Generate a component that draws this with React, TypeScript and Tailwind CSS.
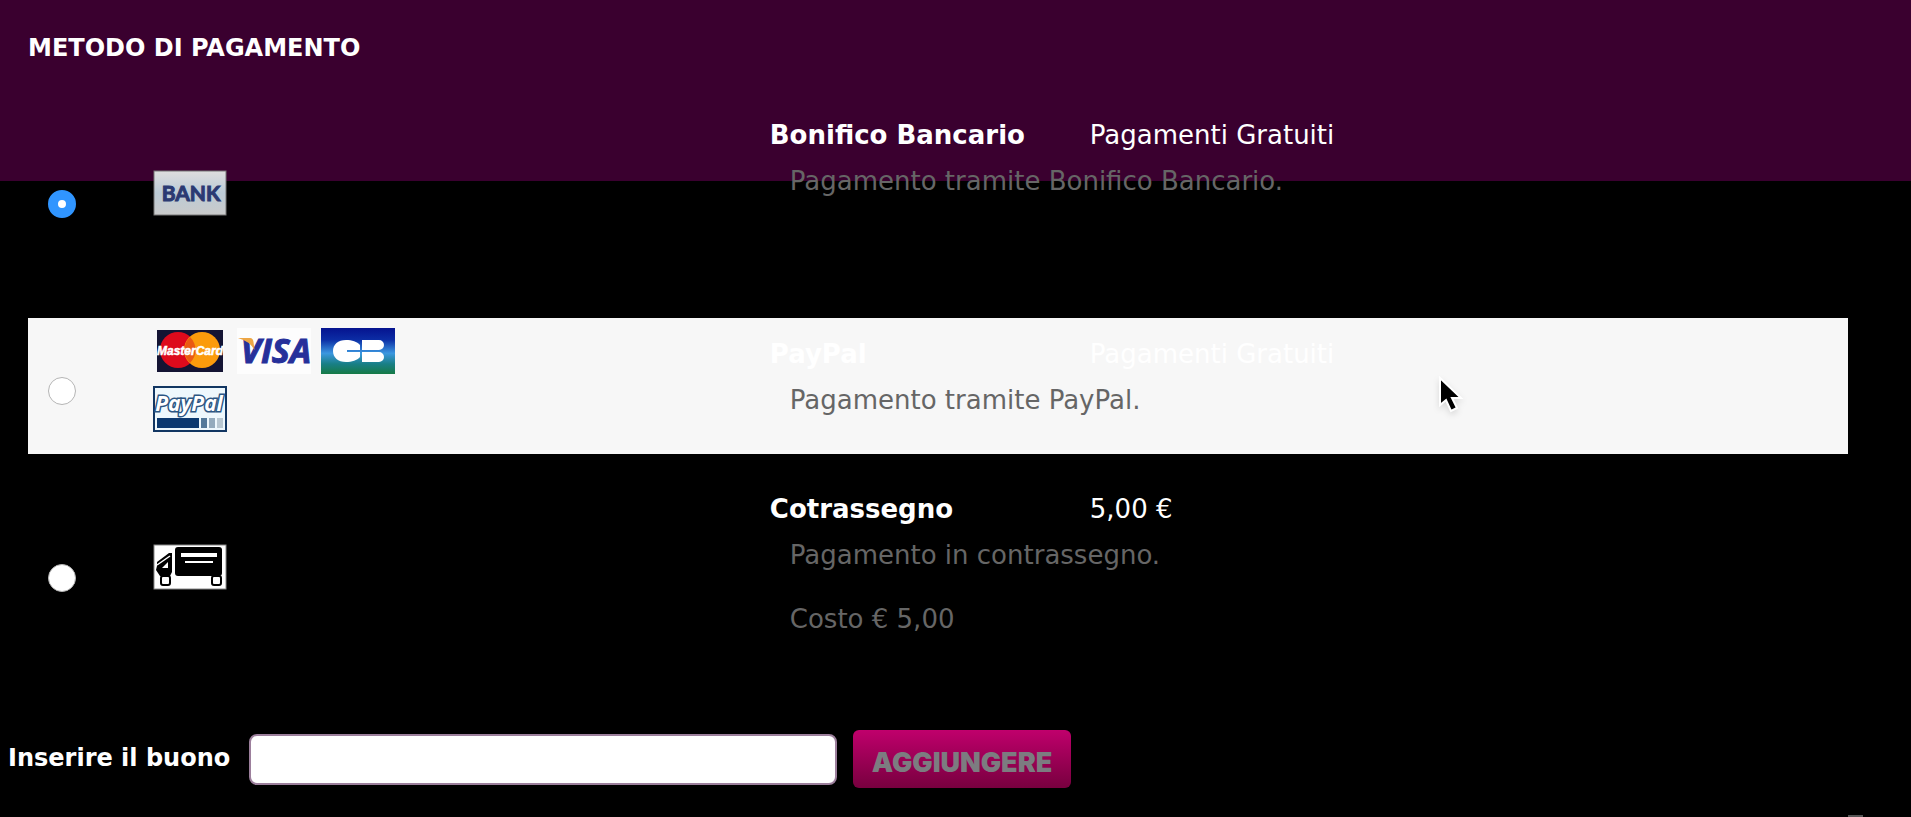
import type { ReactNode } from "react";

function BankLogo() {
  return (
    <svg width="74" height="46" viewBox="0 0 74 46" role="img" aria-label="Bank">
      <defs>
        <linearGradient id="bank" x1="0" y1="0" x2="0" y2="1">
          <stop offset="0" stopColor="#dedede" />
          <stop offset="0.5" stopColor="#bccbd6" />
          <stop offset="1" stopColor="#cacaca" />
        </linearGradient>
      </defs>
      <rect x="1" y="1" width="72" height="44" fill="url(#bank)" stroke="#777" />
      <text x="38" y="31" textAnchor="middle" fontSize="21" fontWeight="700" fill="#2b3a72" stroke="#2b3a72" strokeWidth="1" className="font-['Lato',sans-serif]">
        BANK
      </text>
    </svg>
  );
}

function MasterCardLogo() {
  return (
    <svg width="74" height="46" viewBox="0 0 74 46" role="img" aria-label="MasterCard">
      <rect x="4" y="2" width="66" height="42" fill="#141433" />
      <circle cx="25" cy="22" r="18" fill="#dd0a1c" />
      <circle cx="49" cy="22" r="18" fill="#fb9b0c" />
      <path d="M37 9a18 18 0 0 1 0 26a18 18 0 0 1 0-26z" fill="#ea5a12" />
      <text x="37" y="27" textAnchor="middle" fontSize="12" fontWeight="700" fontStyle="italic" fill="#fff" stroke="#fff" strokeWidth="0.5" className="font-['Liberation_Sans',sans-serif]">
        MasterCard
      </text>
    </svg>
  );
}

function VisaLogo() {
  return (
    <svg width="74" height="46" viewBox="0 0 74 46" role="img" aria-label="Visa">
      <rect width="74" height="46" fill="#fdfdfd" />
      <text x="39" y="35" textAnchor="middle" fontSize="34" fontWeight="700" fontStyle="italic" fill="#26309a" stroke="#26309a" strokeWidth="1" className="font-['Open_Sans',sans-serif]">
        VISA
      </text>
      <path d="M1 10h12q3 0 3.500 4l1 8q-5-9-16.500-12z" fill="#eda645" />
    </svg>
  );
}

function CarteBleueLogo() {
  return (
    <svg width="74" height="46" viewBox="0 0 74 46" role="img" aria-label="Carte Bleue">
      <defs>
        <linearGradient id="cb" x1="0" y1="0" x2="0" y2="1">
          <stop offset="0" stopColor="#05138f" />
          <stop offset="0.25" stopColor="#0b2ca4" />
          <stop offset="0.55" stopColor="#3b97e0" />
          <stop offset="0.78" stopColor="#197f86" />
          <stop offset="1" stopColor="#167a45" />
        </linearGradient>
      </defs>
      <rect width="74" height="46" fill="url(#cb)" />
      <path d="M39 22V17C36 13.500 31 12 25 12C17 12 12 16.500 12 23S17 34 25 34C31 34 36 32.500 39 29V24H26V22Z" fill="#fff" />
      <path d="M41 12h17a5 5 0 0 1 0 10H41zM41 24h17a5 5 0 0 1 0 10H41z" fill="#fff" />
    </svg>
  );
}

function PayPalLogo() {
  return (
    <svg width="74" height="46" viewBox="0 0 74 46" role="img" aria-label="PayPal">
      <rect x="1" y="1" width="72" height="44" fill="#eef8fd" stroke="#123662" strokeWidth="2" />
      <text x="36" y="25" textAnchor="middle" fontSize="21" fontWeight="700" fontStyle="italic" fill="#fff" stroke="#2c5683" strokeWidth="3" paintOrder="stroke" className="font-['Open_Sans',sans-serif]">
        PayPal
      </text>
      <rect x="4" y="32" width="42" height="10" fill="#0c3970" />
      <rect x="48" y="32" width="6" height="10" fill="#54799a" />
      <rect x="56" y="32" width="6" height="10" fill="#94abbd" />
      <rect x="64" y="32" width="6" height="10" fill="#b9c8d2" />
    </svg>
  );
}

function TruckLogo() {
  return (
    <svg width="74" height="46" viewBox="0 0 74 46" role="img" aria-label="Contrassegno">
      <rect x="1" y="1" width="72" height="44" fill="#fff" stroke="#888" />
      <rect x="22" y="3" width="47" height="29" rx="3" />
      <path d="M28 9h36v4H28zM32 17h28v2H32z" fill="#fff" />
      <path d="M4 18 16 9h3v19l-2 4H7l-4-6 1-4z" />
      <path d="M4 21 17 12" stroke="#fff" strokeWidth="1.500" />
      <path d="M9 24l6-6v6z" fill="#fff" />
      <rect x="8" y="32" width="9" height="9" rx="2" fill="#fff" stroke="#000" strokeWidth="2" />
      <rect x="59" y="32" width="9" height="9" rx="2" fill="#fff" stroke="#000" strokeWidth="2" />
    </svg>
  );
}

function Cursor() {
  return (
    <svg width="26" height="40" viewBox="0 0 26 40" className="pointer-events-none absolute left-[1438px] top-[376px] drop-shadow-md" aria-hidden="true">
      <path d="M2 2v27l6-5 5 11 6-3-5-10h9z" fill="#000" stroke="#fff" strokeWidth="2" />
    </svg>
  );
}

type Method = {
  id: string;
  name: string;
  price: string;
  notes: string[];
  logos: ReactNode;
  row: string;
};

const methods: Method[] = [
  {
    id: "bonifico",
    name: "Bonifico Bancario",
    price: "Pagamenti Gratuiti",
    notes: ["Pagamento tramite Bonifico Bancario.", ""],
    logos: <BankLogo />,
    row: "h-[238px]",
  },
  {
    id: "paypal",
    name: "PayPal",
    price: "Pagamenti Gratuiti",
    notes: ["Pagamento tramite PayPal."],
    logos: (
      <>
        <MasterCardLogo />
        <VisaLogo />
        <CarteBleueLogo />
        <PayPalLogo />
      </>
    ),
    row: "h-[136px] bg-[#f7f7f7]",
  },
  {
    id: "contrassegno",
    name: "Cotrassegno",
    price: "5,00 €",
    notes: ["Pagamento in contrassegno.", "Costo € 5,00"],
    logos: <TruckLogo />,
    row: "h-[238px]",
  },
];

function MethodRow({ method, checked }: { method: Method; checked: boolean }) {
  return (
    <tr className={method.row}>
      <td className="w-[123px] pl-5 pt-2.5 align-middle">
        <input
          type="radio"
          id={method.id}
          name="metodo"
          defaultChecked={checked}
          className="block size-7 appearance-none rounded-full border border-[#b5b5b5] bg-white checked:border-[10px] checked:border-[#3095ff]"
        />
      </td>
      <td className="w-[34%] pb-[13px] pl-0.5 align-middle">
        <div className="flex max-w-[270px] flex-wrap gap-x-2.5 gap-y-3">{method.logos}</div>
      </td>
      <td className="pb-[18px] align-middle">
        <div className="flex">
          <label htmlFor={method.id} className="w-80 shrink-0 font-bold">
            {method.name}
          </label>
          <span>{method.price}</span>
        </div>
        <div className="mt-[14px] flex flex-col gap-8 pl-5 text-[#666]">
          {method.notes.map((note, i) => (
            <p key={i} className="min-h-8">
              {note}
            </p>
          ))}
        </div>
      </td>
    </tr>
  );
}

export default function App() {
  return (
    <main className="relative min-h-screen bg-black bg-[linear-gradient(#3a002f_181px,#000_181px)] font-['DejaVu_Sans',Verdana,sans-serif] text-[26px] leading-8 text-white">
      <h1 className="h-20 pl-7 pt-8 text-[24px] font-bold leading-8">METODO DI PAGAMENTO</h1>

      <div className="pl-7 pr-[63px]">
        <table className="w-full table-fixed">
          <tbody>
            {methods.map((method, i) => (
              <MethodRow key={method.id} method={method} checked={i === 0} />
            ))}
          </tbody>
        </table>
      </div>

      <form className="flex items-center pl-2 pt-[38px]">
        <label htmlFor="buono" className="w-[241px] shrink-0 pb-0.5 text-[24px] font-bold">
          Inserire il buono
        </label>
        <input
          id="buono"
          type="text"
          className="h-[51px] w-[588px] rounded-lg border-2 border-[#9c7f9c] bg-white px-3 text-black"
        />
        <button
          type="button"
          className="ml-4 h-[58px] w-[218px] rounded-md bg-linear-to-b from-[#c0006c] to-[#78003f] pt-2 font-['Inter',sans-serif] text-[27px] font-black text-[#7c7c80]"
        >
          AGGIUNGERE
        </button>
      </form>

      <div className="absolute bottom-0 right-12 h-0.5 w-[15px] bg-[#555]" />
      <Cursor />
    </main>
  );
}
